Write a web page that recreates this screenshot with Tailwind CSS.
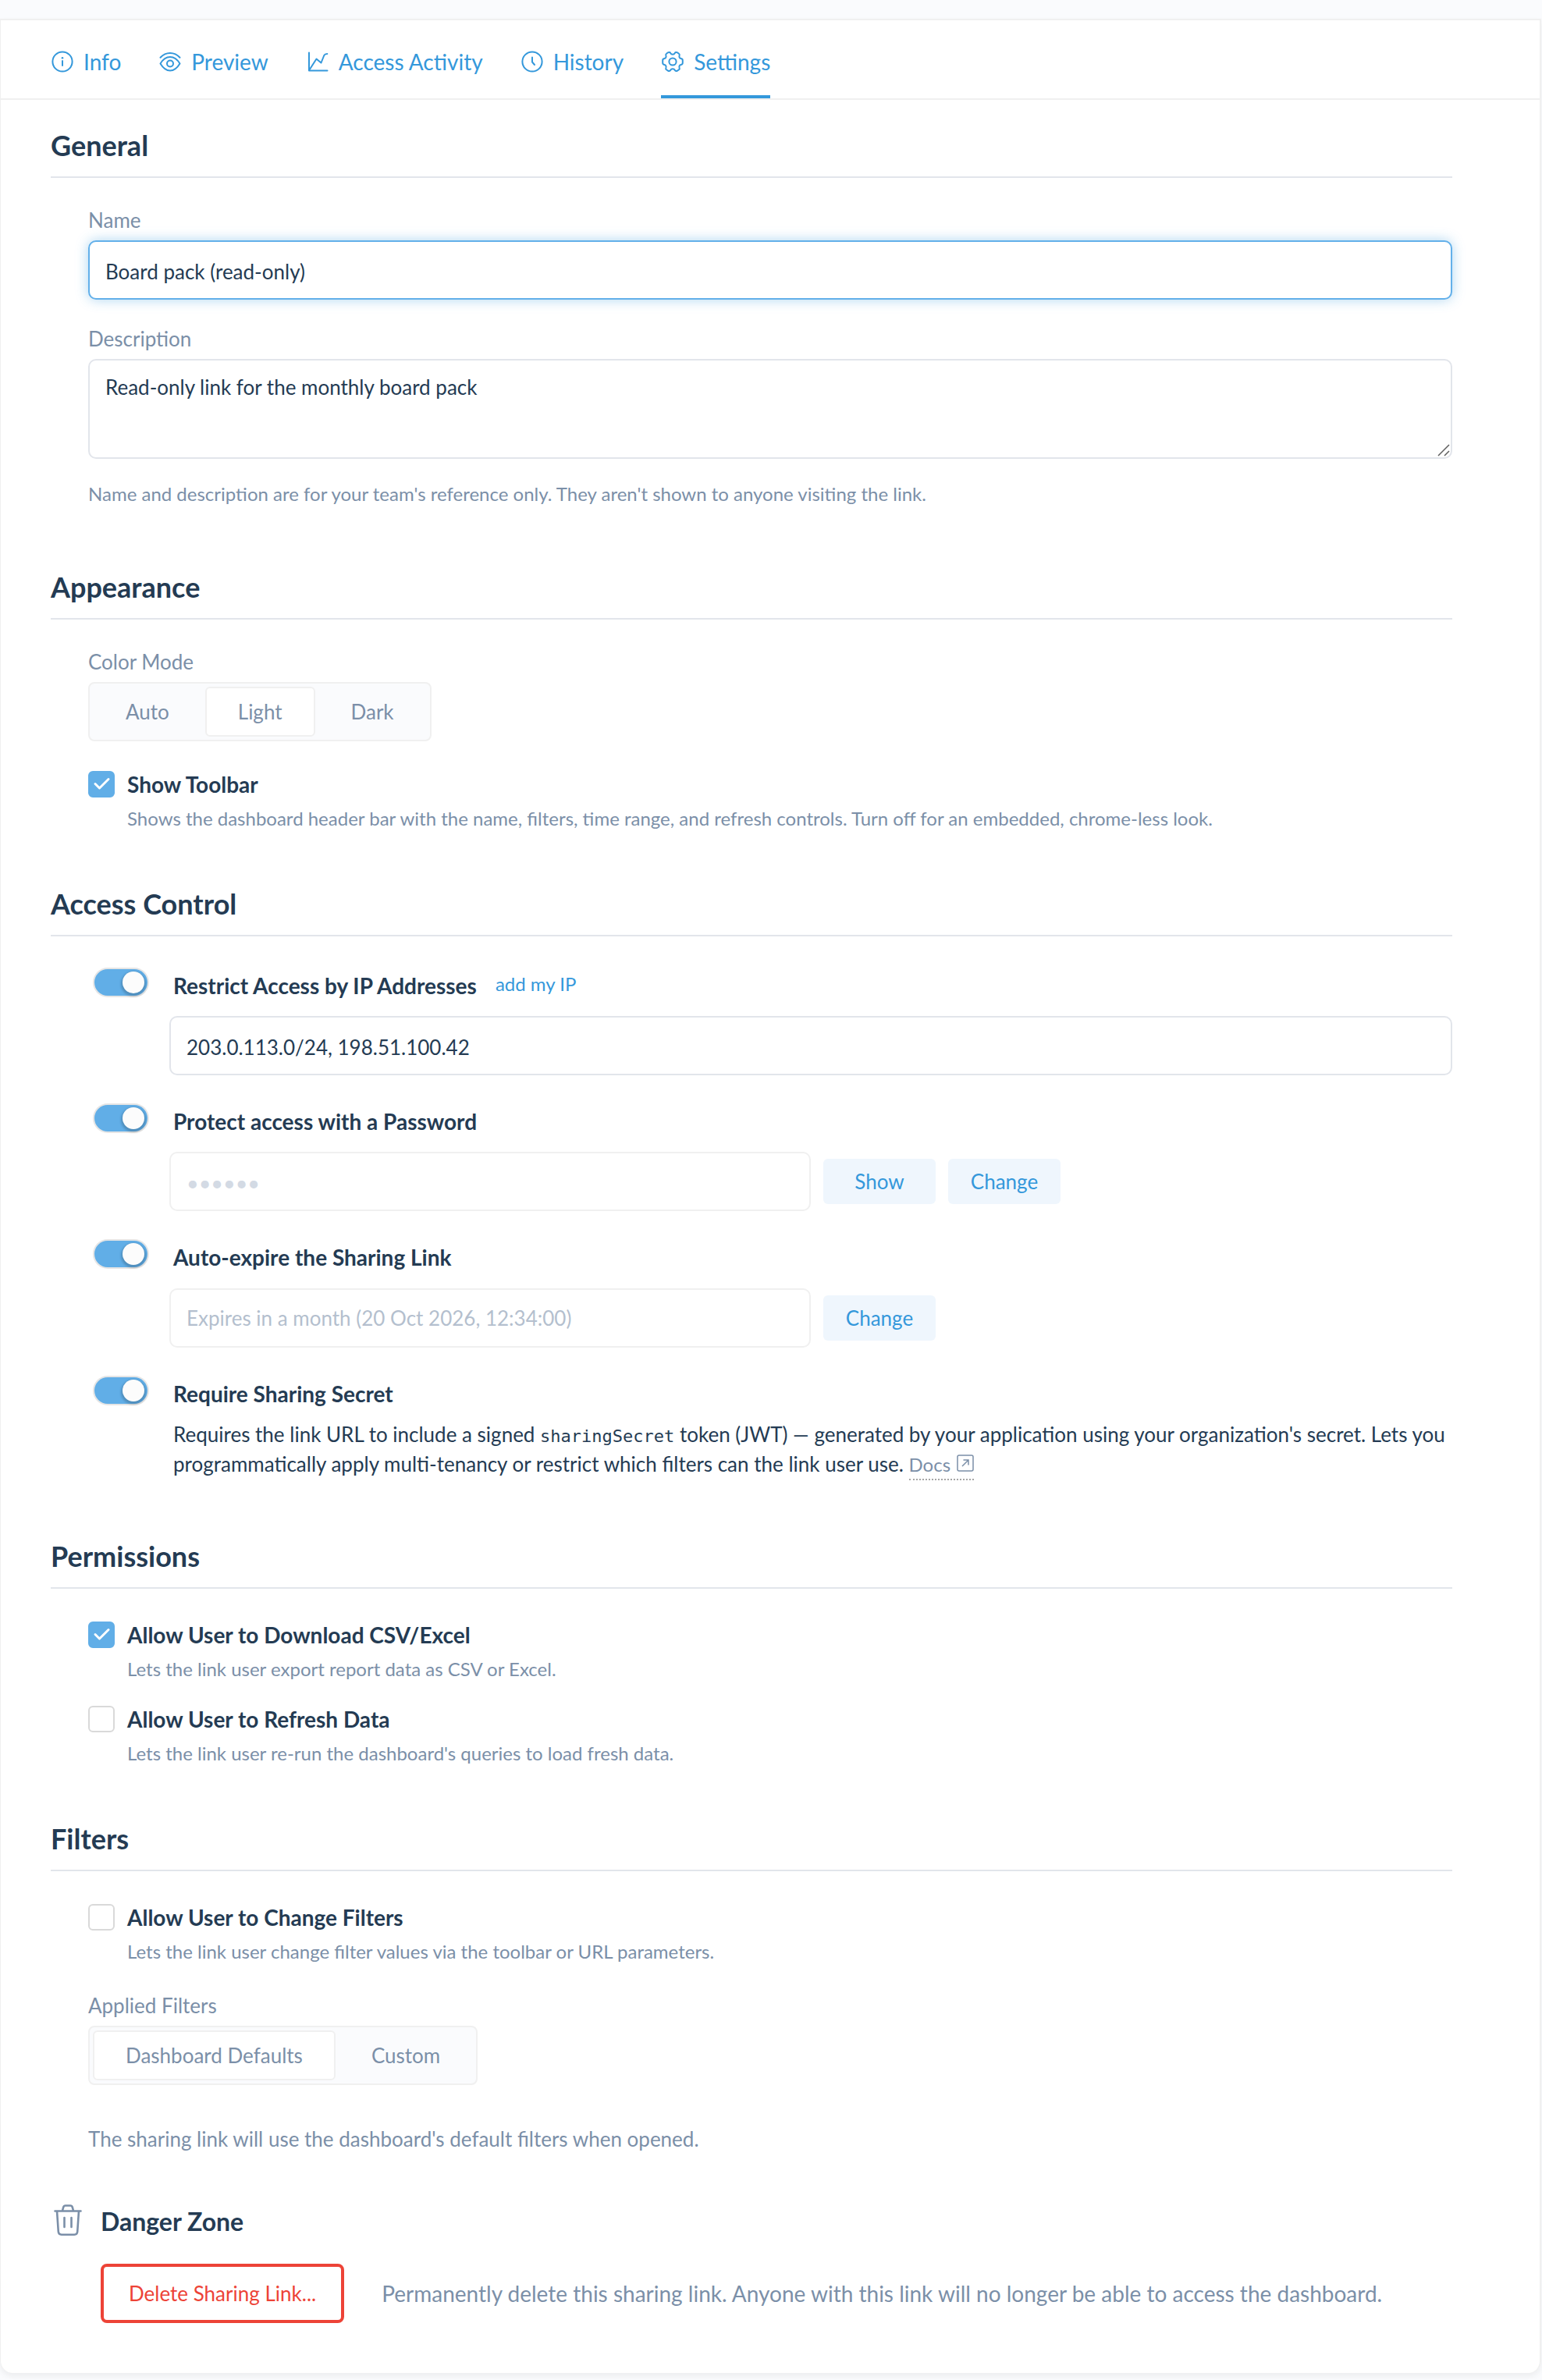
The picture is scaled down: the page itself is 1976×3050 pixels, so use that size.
<!DOCTYPE html>
<html lang="en">
<head>
<meta charset="utf-8">
<meta name="viewport" content="width=device-width, initial-scale=1">
<title>Sharing Link Settings</title>
<script src="https://cdn.jsdelivr.net/npm/@tailwindcss/browser@4"></script>
</head>
<body class="bg-[#fafbfd] font-[Lato,sans-serif] text-[26px] leading-[38px] text-[#243b53]">
<div class="h-6"></div>
<div class="mr-px mb-2 rounded-b-2xl border-t-2 border-r-2 border-l border-[#f0f0f0] bg-white shadow-[0_4px_8px_rgba(0,0,0,0.06)]">

  <nav class="flex h-[102px] gap-12 border-b-2 border-[#f0f0f0] pl-16 text-[28px] text-[#3498db]" aria-label="Sharing link">
    <a href="#info" class="flex items-center gap-3 border-b-4 border-transparent pt-2.5">
      <svg class="size-[30px]" viewBox="0 0 30 30" fill="none" stroke="currentColor" stroke-width="2" stroke-linecap="round"><circle cx="15" cy="15" r="12.6"/><path d="M15 14v6"/><circle cx="15" cy="10.3" r="1.3" fill="currentColor" stroke="none"/></svg>
      Info
    </a>
    <a href="#preview" class="flex items-center gap-3 border-b-4 border-transparent pt-2.5">
      <svg class="size-[30px]" viewBox="0 0 30 30" fill="none" stroke="currentColor" stroke-width="2" stroke-linecap="round" stroke-linejoin="round"><path d="M2.5 9.8C6 6 10.3 4 15 4s9 2 12.5 5.8"/><path d="M2.5 17.5C5.5 12.5 9.500 9 15 9s9.500 3.500 12.500 8.500C24.500 22.500 20.500 26.500 15 26.500S5.500 22.500 2.500 17.500z"/><circle cx="15" cy="17.500" r="4"/></svg>
      Preview
    </a>
    <a href="#activity" class="flex items-center gap-3 border-b-4 border-transparent pt-2.5">
      <svg class="size-[30px]" viewBox="0 0 30 30" fill="none" stroke="currentColor" stroke-width="2" stroke-linecap="round" stroke-linejoin="round"><path d="M4 3.500v23h23.500"/><path d="M4.500 25.500L13.500 11.500l6 5 3.800-9.500c.7-1.300 2-2 4-2"/></svg>
      Access Activity
    </a>
    <a href="#history" class="flex items-center gap-3 border-b-4 border-transparent pt-2.5">
      <svg class="size-[30px]" viewBox="0 0 30 30" fill="none" stroke="currentColor" stroke-width="2" stroke-linecap="round" stroke-linejoin="round"><circle cx="15" cy="15" r="12.600"/><path d="M15 9.500v6l3 3.500"/></svg>
      History
    </a>
    <a href="#settings" aria-current="page" class="flex items-center gap-3 border-b-4 border-[#3498db] pt-2.5">
      <svg class="size-[30px]" viewBox="0 0 30 30" fill="none" stroke="currentColor" stroke-width="2" stroke-linejoin="round"><path d="M12.300 4.200c-.5-1.200-2.200-1.500-3.300-.8L7.300 4.500c-1 .7-1.300 1.900-.9 2.900.6 1.700-.3 3.300-2.100 3.600C3 11.200 2.200 12.200 2.200 13.400v3.200c0 1.200.8 2.200 2.100 2.400 1.800.3 2.700 1.900 2.100 3.600-.4 1-.1 2.200.9 2.900l1.700 1.100c1.100.7 2.800.4 3.300-.8 1-2 4.400-2 5.400 0 .5 1.200 2.200 1.500 3.300.8l1.700-1.100c1-.7 1.300-1.900.9-2.900-.6-1.700.3-3.300 2.100-3.600 1.300-.2 2.100-1.200 2.100-2.400v-3.200c0-1.200-.8-2.200-2.100-2.400-1.800-.3-2.700-1.900-2.100-3.600.4-1 .1-2.200-.9-2.900L21 3.400c-1.100-.7-2.800-.4-3.300.8-1 2-4.400 2-5.400 0z"/><circle cx="15" cy="15" r="4.600"/></svg>
      Settings
    </a>
  </nav>

  <main class="flex flex-col gap-[67px] pt-[34px] pr-28 pb-16 pl-16">

    <section class="pb-[10px]">
      <h2 class="border-b-2 border-[#e2e5eb] pb-4 text-[36px] leading-[48px] font-bold">General</h2>
      <div class="pt-[35px] pl-12">
        <label for="name" class="mb-[7px] block text-[#7b8fa8]">Name</label>
        <input id="name" type="text" value="Board pack (read-only)" class="block h-[76px] w-full rounded-[10px] border-2 border-[#63b0ea] bg-white px-5 pt-[3px] shadow-[0_0_16px_rgba(52,152,219,0.4)] outline-none">
        <label for="description" class="mt-[31px] mb-[7px] block text-[#7b8fa8]">Description</label>
        <div class="relative">
          <textarea id="description" class="block h-32 w-full resize-none rounded-[10px] border-2 border-[#e2e5eb] bg-white px-5 py-[15px] outline-none">Read-only link for the monthly board pack</textarea>
          <svg class="pointer-events-none absolute right-[3px] bottom-[3px] size-4" viewBox="0 0 16 16" fill="none" stroke="#5f5f5f" stroke-width="1.500" aria-hidden="true"><path d="M1 15L15 1M9 15l6-6"/></svg>
        </div>
        <p class="mt-[27px] text-[24px] leading-9 text-[#7b8fa8]">Name and description are for your team's reference only. They aren't shown to anyone visiting the link.</p>
      </div>
    </section>

    <section>
      <h2 class="border-b-2 border-[#e2e5eb] pb-4 text-[36px] leading-[48px] font-bold">Appearance</h2>
      <div class="pt-[35px] pl-12">
        <fieldset>
          <legend class="mb-[7px] text-[#7b8fa8]">Color Mode</legend>
          <div class="flex h-[76px] w-fit gap-1 rounded-lg border-2 border-[#f0f0f0] bg-[#fafbfd] p-1 text-[#7b8fa8]">
            <label class="flex items-center rounded-md border-2 border-transparent px-10 has-checked:border-[#f0f0f0] has-checked:bg-white"><input type="radio" name="color-mode" class="sr-only">Auto</label>
            <label class="flex items-center rounded-md border-2 border-transparent px-10 has-checked:border-[#f0f0f0] has-checked:bg-white"><input type="radio" name="color-mode" class="sr-only" checked>Light</label>
            <label class="flex items-center rounded-md border-2 border-transparent px-10 has-checked:border-[#f0f0f0] has-checked:bg-white"><input type="radio" name="color-mode" class="sr-only">Dark</label>
          </div>
        </fieldset>
        <div class="mt-[34px] flex gap-4">
          <div class="relative mt-1 size-[34px] shrink-0">
            <input id="toolbar" type="checkbox" checked class="peer block size-[34px] appearance-none rounded-md border-2 border-[#d9d9d9] bg-white checked:border-[#61aee7] checked:bg-[#61aee7]">
            <svg class="pointer-events-none absolute inset-0 hidden size-[34px] peer-checked:block" viewBox="0 0 34 34" fill="none" stroke="#fff" stroke-width="3" stroke-linecap="round" stroke-linejoin="round"><path d="M9 16.500l5.500 5.500L26 10.500"/></svg>
          </div>
          <div>
            <label for="toolbar" class="block text-[28px] leading-[42px] font-bold">Show Toolbar</label>
            <p class="mt-[5px] text-[24px] leading-9 text-[#7b8fa8]">Shows the dashboard header bar with the name, filters, time range, and refresh controls. Turn off for an embedded, chrome-less look.</p>
          </div>
        </div>
      </div>
    </section>

    <section class="pb-2">
      <h2 class="border-b-2 border-[#e2e5eb] pb-4 text-[36px] leading-[48px] font-bold">Access Control</h2>
      <div class="flex flex-col gap-[38px] pt-[42px] pl-12">
        <div class="flex">
          <div class="w-[104px] shrink-0 pl-2">
            <input id="restrict-ip" type="checkbox" role="switch" checked class="flex h-[34px] w-[68px] appearance-none rounded-full bg-[#61aee7] p-[3px] shadow-[0_0_0_2px_rgba(0,0,0,0.1)] before:mr-px before:ml-auto before:size-7 before:rounded-full before:bg-[#fcfcfc] before:shadow-[0_2px_3px_2px_rgba(0,0,0,0.18)]">
          </div>
          <div class="grow">
            <div class="flex items-start gap-6 pl-[5px]">
              <label for="restrict-ip" class="text-[28px] leading-[42px] font-bold">Restrict Access by IP Addresses</label>
              <a href="#add-ip" class="text-[24px] text-[#3498db]">add my IP</a>
            </div>
            <input type="text" aria-label="Allowed IP addresses" value="203.0.113.0/24, 198.51.100.42" class="mt-[18px] block h-[76px] w-full rounded-[10px] border-2 border-[#e2e5eb] bg-white px-5 pt-[3px]">
          </div>
        </div>
        <div class="flex">
          <div class="w-[104px] shrink-0 pl-2">
            <input id="protect" type="checkbox" role="switch" checked class="flex h-[34px] w-[68px] appearance-none rounded-full bg-[#61aee7] p-[3px] shadow-[0_0_0_2px_rgba(0,0,0,0.1)] before:mr-px before:ml-auto before:size-7 before:rounded-full before:bg-[#fcfcfc] before:shadow-[0_2px_3px_2px_rgba(0,0,0,0.18)]">
          </div>
          <div class="grow">
            <label for="protect" class="block pl-[5px] text-[28px] leading-[42px] font-bold">Protect access with a Password</label>
            <div class="mt-[18px] flex items-center gap-4">
              <input type="password" aria-label="Password" value="secret" disabled class="h-[76px] w-1/2 rounded-[10px] border-2 border-[#f0f0f0] bg-white px-5 pt-[3px] text-[27px] text-[#d3dae4]">
              <button type="button" class="h-[58px] w-36 rounded-md bg-[#eff6fd] text-[#3498db]">Show</button>
              <button type="button" class="h-[58px] w-36 rounded-md bg-[#eff6fd] text-[#3498db]">Change</button>
            </div>
          </div>
        </div>
        <div class="flex">
          <div class="w-[104px] shrink-0 pl-2">
            <input id="expire" type="checkbox" role="switch" checked class="flex h-[34px] w-[68px] appearance-none rounded-full bg-[#61aee7] p-[3px] shadow-[0_0_0_2px_rgba(0,0,0,0.1)] before:mr-px before:ml-auto before:size-7 before:rounded-full before:bg-[#fcfcfc] before:shadow-[0_2px_3px_2px_rgba(0,0,0,0.18)]">
          </div>
          <div class="grow">
            <label for="expire" class="block pl-[5px] text-[28px] leading-[42px] font-bold">Auto-expire the Sharing Link</label>
            <div class="mt-[19px] flex items-center gap-4">
              <input type="text" aria-label="Expiry" value="Expires in a month (20 Oct 2026, 12:34:00)" disabled class="h-[76px] w-1/2 rounded-[10px] border-2 border-[#f0f0f0] bg-white px-5 text-[#b4bfce]">
              <button type="button" class="h-[58px] w-36 rounded-md bg-[#eff6fd] text-[#3498db]">Change</button>
            </div>
          </div>
        </div>
        <div class="flex">
          <div class="w-[104px] shrink-0 pl-2">
            <input id="secret" type="checkbox" role="switch" checked class="flex h-[34px] w-[68px] appearance-none rounded-full bg-[#61aee7] p-[3px] shadow-[0_0_0_2px_rgba(0,0,0,0.1)] before:mr-px before:ml-auto before:size-7 before:rounded-full before:bg-[#fcfcfc] before:shadow-[0_2px_3px_2px_rgba(0,0,0,0.18)]">
          </div>
          <div class="grow pl-[5px]">
            <label for="secret" class="block text-[28px] leading-[42px] font-bold">Require Sharing Secret</label>
            <p class="mt-3">Requires the link URL to include a signed <code class="font-['DejaVu_Sans_Mono',monospace] text-[22px] leading-none">sharingSecret</code> token (JWT) — generated by your application using your organization's secret. Lets you programmatically apply multi-tenancy or restrict which filters can the link user use. <a href="#docs" class="border-b-2 border-dotted border-[#a6a6a6] pb-1 text-[24px] leading-none text-[#7b8fa8]">Docs <svg class="ml-0.5 inline size-[22px] align-baseline" viewBox="0 0 22 22" fill="none" stroke="currentColor" stroke-width="1.500"><rect x="1" y="1" width="20" height="20" rx="2"/><path d="M7 15l7.500-7.500M8.500 7h6.500v6.500"/></svg></a></p>
          </div>
        </div>
      </div>
    </section>

    <section>
      <h2 class="border-b-2 border-[#e2e5eb] pb-4 text-[36px] leading-[48px] font-bold">Permissions</h2>
      <div class="flex flex-col gap-[25px] pt-[38px] pl-12">
        <div class="flex gap-4">
          <div class="relative mt-1 size-[34px] shrink-0">
            <input id="download" type="checkbox" checked class="peer block size-[34px] appearance-none rounded-md border-2 border-[#d9d9d9] bg-white checked:border-[#61aee7] checked:bg-[#61aee7]">
            <svg class="pointer-events-none absolute inset-0 hidden size-[34px] peer-checked:block" viewBox="0 0 34 34" fill="none" stroke="#fff" stroke-width="3" stroke-linecap="round" stroke-linejoin="round"><path d="M9 16.500l5.500 5.500L26 10.500"/></svg>
          </div>
          <div>
            <label for="download" class="block text-[28px] leading-[42px] font-bold">Allow User to Download CSV/Excel</label>
            <p class="mt-[5px] text-[24px] leading-9 text-[#7b8fa8]">Lets the link user export report data as CSV or Excel.</p>
          </div>
        </div>
        <div class="flex gap-4">
          <div class="relative mt-1 size-[34px] shrink-0">
            <input id="refresh" type="checkbox" class="peer block size-[34px] appearance-none rounded-md border-2 border-[#d9d9d9] bg-white checked:border-[#61aee7] checked:bg-[#61aee7]">
            <svg class="pointer-events-none absolute inset-0 hidden size-[34px] peer-checked:block" viewBox="0 0 34 34" fill="none" stroke="#fff" stroke-width="3" stroke-linecap="round" stroke-linejoin="round"><path d="M9 16.500l5.500 5.500L26 10.500"/></svg>
          </div>
          <div>
            <label for="refresh" class="block text-[28px] leading-[42px] font-bold">Allow User to Refresh Data</label>
            <p class="mt-[5px] text-[24px] leading-9 text-[#7b8fa8]">Lets the link user re-run the dashboard's queries to load fresh data.</p>
          </div>
        </div>
      </div>
    </section>

    <section>
      <h2 class="border-b-2 border-[#e2e5eb] pb-4 text-[36px] leading-[48px] font-bold">Filters</h2>
      <div class="pt-[38px] pl-12">
        <div class="flex gap-4">
          <div class="relative mt-1 size-[34px] shrink-0">
            <input id="change-filters" type="checkbox" class="peer block size-[34px] appearance-none rounded-md border-2 border-[#d9d9d9] bg-white checked:border-[#61aee7] checked:bg-[#61aee7]">
            <svg class="pointer-events-none absolute inset-0 hidden size-[34px] peer-checked:block" viewBox="0 0 34 34" fill="none" stroke="#fff" stroke-width="3" stroke-linecap="round" stroke-linejoin="round"><path d="M9 16.500l5.500 5.500L26 10.500"/></svg>
          </div>
          <div>
            <label for="change-filters" class="block text-[28px] leading-[42px] font-bold">Allow User to Change Filters</label>
            <p class="mt-[5px] text-[24px] leading-9 text-[#7b8fa8]">Lets the link user change filter values via the toolbar or URL parameters.</p>
          </div>
        </div>
        <fieldset class="mt-8">
          <legend class="mb-[7px] text-[#7b8fa8]">Applied Filters</legend>
          <div class="flex h-[76px] w-fit gap-1 rounded-lg border-2 border-[#f0f0f0] bg-[#fafbfd] p-1 text-[#7b8fa8]">
            <label class="flex items-center rounded-md border-2 border-transparent px-10 has-checked:border-[#f0f0f0] has-checked:bg-white"><input type="radio" name="applied-filters" class="sr-only" checked>Dashboard Defaults</label>
            <label class="flex items-center rounded-md border-2 border-transparent px-10 has-checked:border-[#f0f0f0] has-checked:bg-white"><input type="radio" name="applied-filters" class="sr-only">Custom</label>
          </div>
        </fieldset>
        <p class="mt-[50px] text-[#7b8fa8]">The sharing link will use the dashboard's default filters when opened.</p>
      </div>
    </section>

    <section class="-mt-0.5">
      <div class="flex items-center gap-[22px]">
        <svg class="h-11 w-[42px] text-[#7b8fa8]" viewBox="0 0 42 44" fill="none" stroke="currentColor" stroke-width="2.600" stroke-linecap="round" stroke-linejoin="round"><path d="M5.500 8.500h33M8 8.500l1.800 26.500c.2 2.300 1.500 3.700 4 3.700h16.400c2.500 0 3.800-1.400 4-3.700L36 8.500M15 8l1.200-4.300c.4-1.500 1.200-2.200 2.700-2.200h6.200c1.500 0 2.300.7 2.700 2.200L29 8M17.500 17v12M26.500 17v12"/></svg>
        <h2 class="text-[32px] leading-[44px] font-bold">Danger Zone</h2>
      </div>
      <div class="mt-8 flex items-center gap-12 pl-16">
        <button type="button" class="h-[76px] shrink-0 rounded-lg border-4 border-[#ed4337] px-8 text-[#ed4337]">Delete Sharing Link...</button>
        <p class="text-[28px] text-[#7b8fa8]">Permanently delete this sharing link. Anyone with this link will no longer be able to access the dashboard.</p>
      </div>
    </section>
  </main>
</div>
</body>
</html>
